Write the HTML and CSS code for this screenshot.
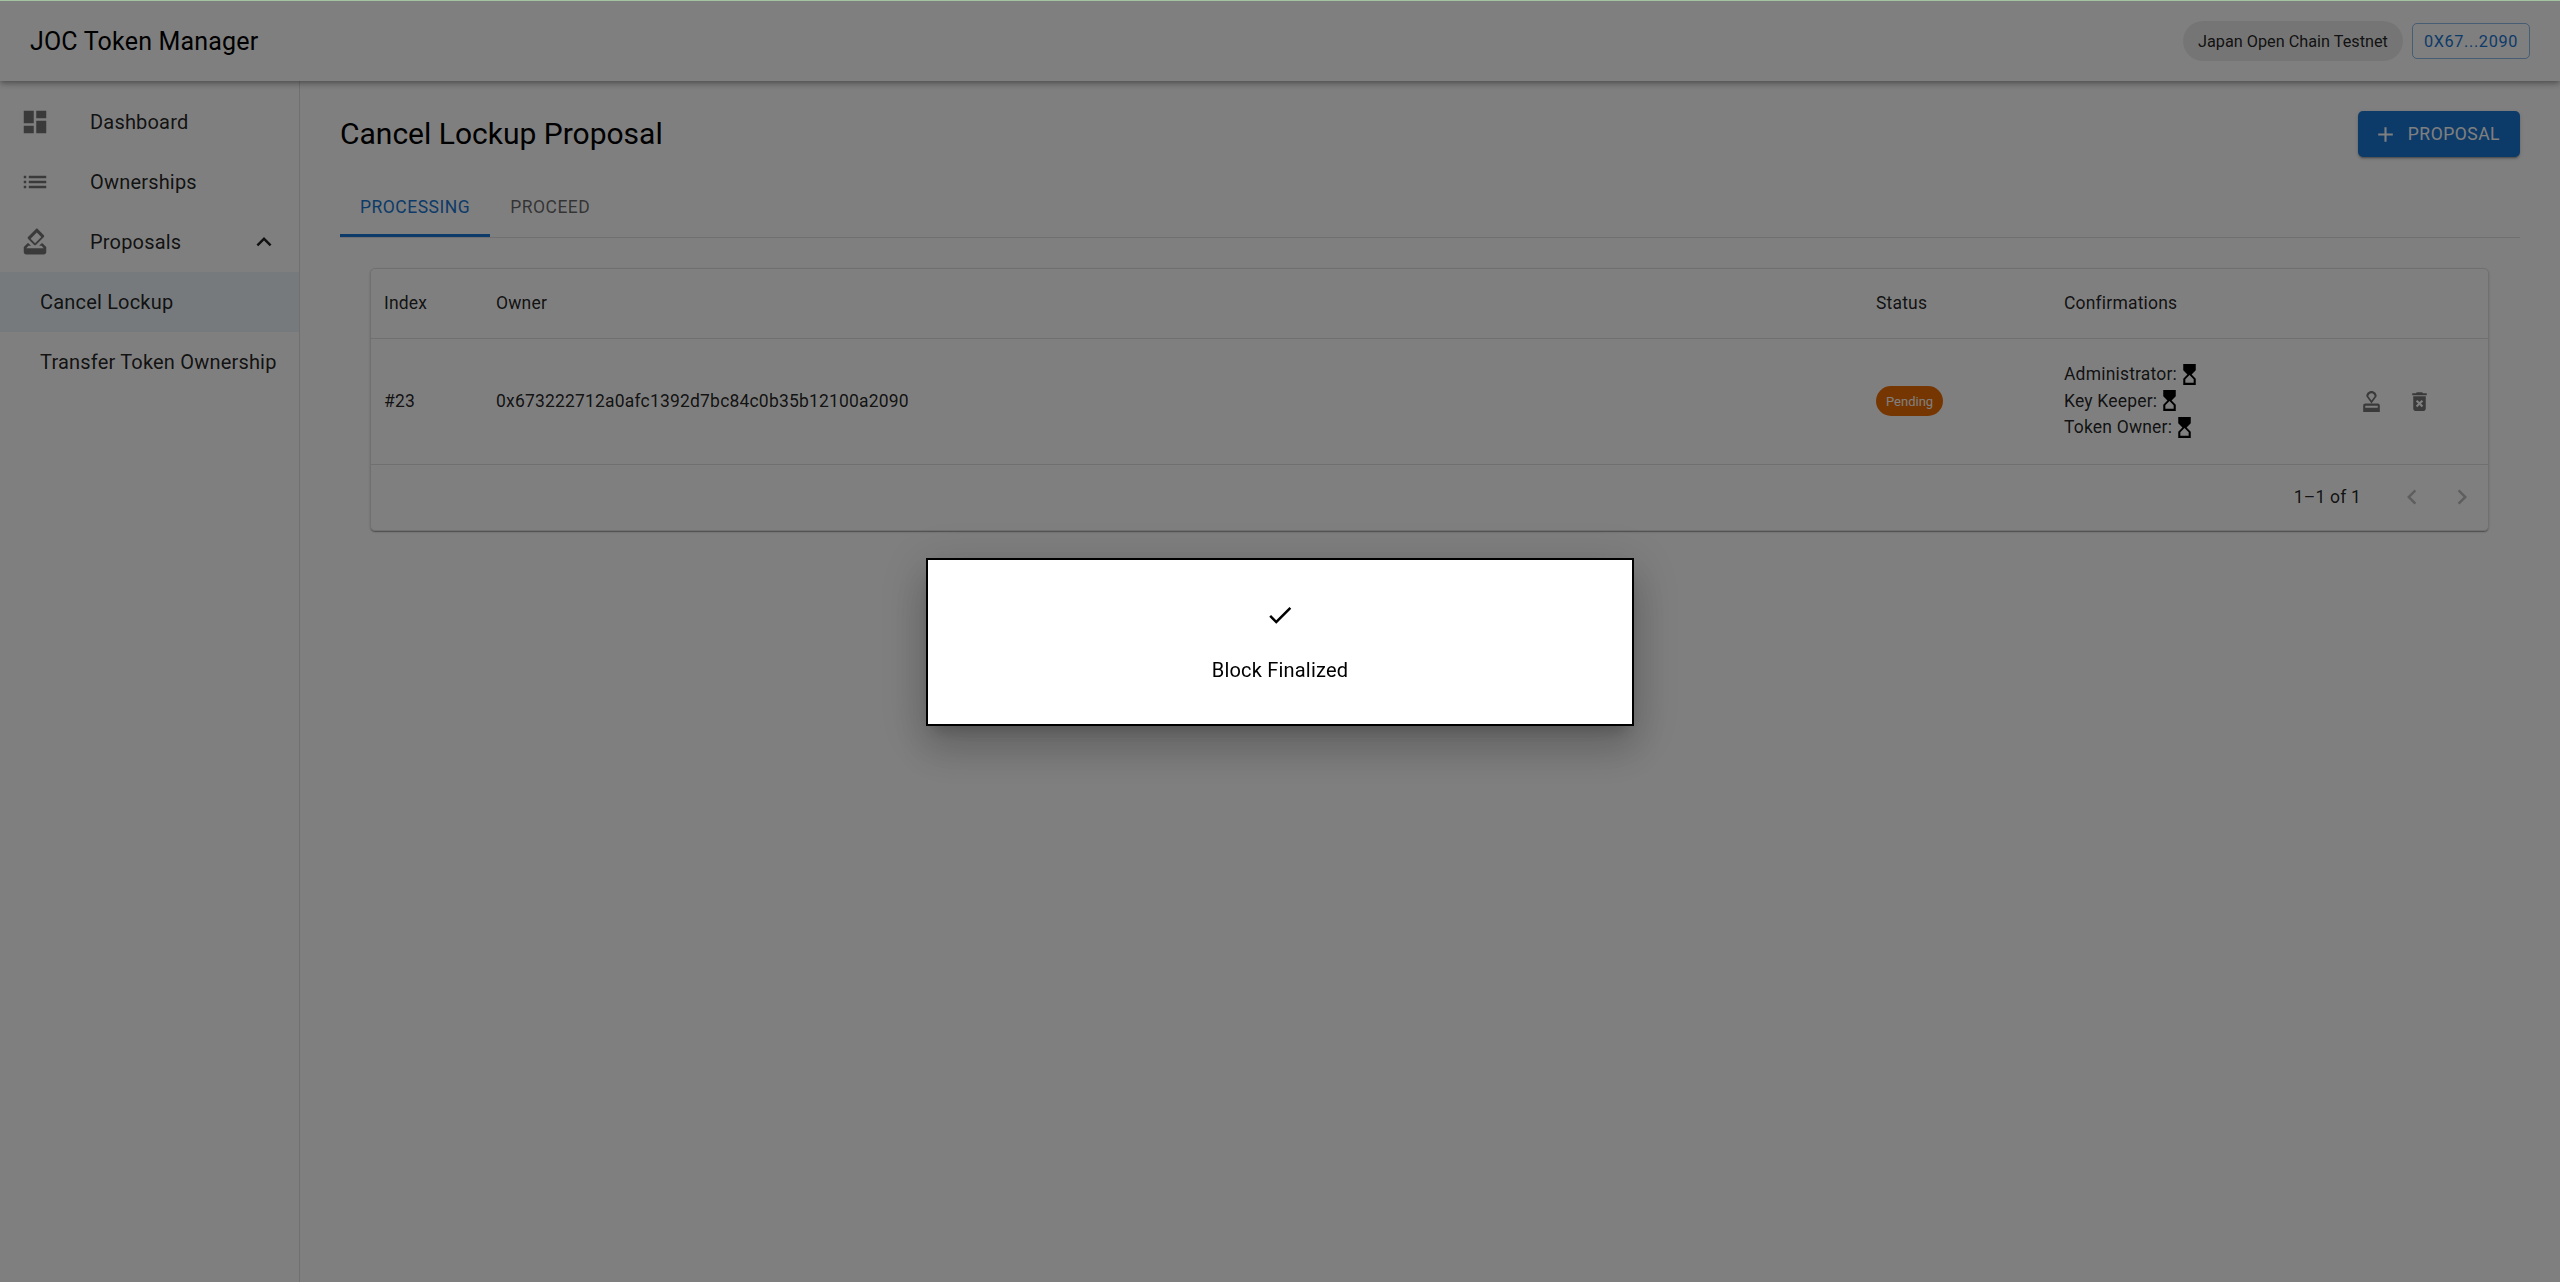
FILE: index.html
```html
<!DOCTYPE html>
<html lang="en">
<head>
    <meta charset="UTF-8">
    <meta name="viewport" content="width=device-width, initial-scale=1.0">
    <title>JOC Token Manager</title>
    <link rel="stylesheet" href="styles.css">
</head>
<body>
    <header class="app-bar">
        <div class="app-title">JOC Token Manager</div>
        <div class="app-bar-right">
            <div class="network-chip">Japan Open Chain Testnet</div>
            <button class="wallet-button">0x67...2090</button>
        </div>
    </header>
    <div class="layout">
        <nav class="sidebar">
            <div class="nav-item">
                <svg class="nav-icon" viewBox="0 0 24 24"><path d="M3 13h8V3H3v10zm0 8h8v-6H3v6zm10 0h8V11h-8v10zm0-18v6h8V3h-8z"/></svg>
                <span>Dashboard</span>
            </div>
            <div class="nav-item">
                <svg class="nav-icon" viewBox="0 0 24 24"><path d="M3 13h2v-2H3v2zm0 4h2v-2H3v2zm0-8h2V7H3v2zm4 4h14v-2H7v2zm0 4h14v-2H7v2zM7 7v2h14V7H7z"/></svg>
                <span>Ownerships</span>
            </div>
            <div class="nav-item">
                <svg class="nav-icon" viewBox="0 0 24 24"><path d="M18 13h-.68l-2 2h1.91L19 17H5l1.78-2h2.05l-2-2H6l-3 3v4c0 1.1.89 1.99 1.99 1.99H19c1.1 0 2-.89 2-1.99v-4l-3-3zm-1-5.05-4.95 4.95-3.54-3.54 4.95-4.95L17 7.95zm-4.24-6.36L6.39 7.95c-.39.39-.39 1.02 0 1.41l4.95 4.95c.39.39 1.02.39 1.41 0l6.36-6.36c.39-.39.39-1.02 0-1.41L14.16 1.6c-.38-.4-1.01-.4-1.4-.01z"/></svg>
                <span>Proposals</span>
                <svg class="nav-expand" viewBox="0 0 24 24"><path d="M12 8l-6 6 1.41 1.41L12 10.83l4.59 4.58L18 14z"/></svg>
            </div>
            <div class="nav-sub selected">Cancel Lockup</div>
            <div class="nav-sub">Transfer Token Ownership</div>
        </nav>
        <main class="content">
            <div class="page-head">
                <h1 class="page-title">Cancel Lockup Proposal</h1>
                <button class="add-button">
                    <svg viewBox="0 0 24 24"><path d="M19 13h-6v6h-2v-6H5v-2h6V5h2v6h6v2z"/></svg>
                    Proposal
                </button>
            </div>
            <div class="tabs">
                <div class="tab active">Processing</div>
                <div class="tab">Proceed</div>
            </div>
            <div class="card">
                <div class="grid-row grid-head">
                    <div class="cell">Index</div>
                    <div class="cell">Owner</div>
                    <div class="cell">Status</div>
                    <div class="cell">Confirmations</div>
                    <div class="cell"></div>
                </div>
                <div class="grid-row grid-body">
                    <div class="cell">#23</div>
                    <div class="cell">0x673222712a0afc1392d7bc84c0b35b12100a2090</div>
                    <div class="cell"><span class="status-chip">Pending</span></div>
                    <div class="cell confirmations">
                        <div class="confirm-line">Administrator:
                            <svg viewBox="0 0 24 24"><path d="m6 2 .01 6L10 12l-3.99 4.01L6 22h12v-6l-4-4 4-3.99V2H6zm10 14.5V20H8v-3.5l4-4 4 4z"/></svg>
                        </div>
                        <div class="confirm-line">Key Keeper:
                            <svg viewBox="0 0 24 24"><path d="m6 2 .01 6L10 12l-3.99 4.01L6 22h12v-6l-4-4 4-3.99V2H6zm10 14.5V20H8v-3.5l4-4 4 4z"/></svg>
                        </div>
                        <div class="confirm-line">Token Owner:
                            <svg viewBox="0 0 24 24"><path d="m6 2 .01 6L10 12l-3.99 4.01L6 22h12v-6l-4-4 4-3.99V2H6zm10 14.5V20H8v-3.5l4-4 4 4z"/></svg>
                        </div>
                    </div>
                    <div class="cell actions">
                        <svg viewBox="0 0 24 24"><path d="M4 16v6h16v-6c0-1.1-.9-2-2-2H6c-1.1 0-2 .9-2 2zm14 2H6v-2h12v2zM12 2C9.24 2 7 4.24 7 7l5 7 5-7c0-2.76-2.24-5-5-5zm0 9L9 7c0-1.66 1.34-3 3-3s3 1.34 3 3l-3 4z"/></svg>
                        <svg viewBox="0 0 24 24"><path d="M6 19c0 1.1.9 2 2 2h8c1.1 0 2-.9 2-2V7H6v12zm2.46-7.12 1.41-1.41L12 12.59l2.12-2.12 1.41 1.41L13.41 14l2.12 2.12-1.41 1.41L12 15.41l-2.12 2.12-1.41-1.41L10.59 14l-2.13-2.12zM15.5 4l-1-1h-5l-1 1H5v2h14V4z"/></svg>
                    </div>
                </div>
                <div class="grid-foot">
                    <span class="page-count">1–1 of 1</span>
                    <svg class="page-arrow" viewBox="0 0 24 24"><path d="M15.41 7.41 14 6l-6 6 6 6 1.41-1.41L10.83 12z"/></svg>
                    <svg class="page-arrow" viewBox="0 0 24 24"><path d="M10 6 8.59 7.41 13.17 12l-4.58 4.59L10 18l6-6z"/></svg>
                </div>
            </div>
        </main>
    </div>
    <div class="backdrop">
        <div class="modal">
            <svg class="modal-icon" viewBox="0 0 24 24"><path d="M9 16.17 4.83 12l-1.42 1.41L9 19 21 7l-1.41-1.41z"/></svg>
            <div class="modal-text">Block Finalized</div>
        </div>
    </div>
</body>
</html>
```

FILE: styles.css
```css
* {
    box-sizing: border-box;
}
body {
    font-family: Roboto, "Liberation Sans", sans-serif;
    margin: 0;
    height: 100vh;
    overflow: hidden;
    display: flex;
    flex-direction: column;
    background-color: #fff;
    color: rgba(0, 0, 0, 0.87);
}
svg {
    display: block;
    fill: currentColor;
}
.app-bar {
    height: 81px;
    flex-shrink: 0;
    padding: 1px 30px 0;
    display: flex;
    align-items: center;
    justify-content: space-between;
    background-color: #fff;
    box-shadow: 0 2px 4px -1px rgba(0, 0, 0, 0.2), 0 4px 5px rgba(0, 0, 0, 0.14), 0 1px 10px rgba(0, 0, 0, 0.12);
    position: relative;
    z-index: 1;
}
.app-title {
    font-size: 25px;
    font-weight: 400;
    letter-spacing: 0.0075em;
    color: #000;
}
.app-bar-right {
    display: flex;
    align-items: center;
    gap: 9px;
}
.network-chip {
    height: 40px;
    padding: 0 15px;
    border-radius: 20px;
    display: flex;
    align-items: center;
    font-size: 16.25px;
    background-color: rgba(0, 0, 0, 0.08);
}
.wallet-button {
    height: 36px;
    padding: 0 11px;
    font-family: inherit;
    font-size: 16.25px;
    font-weight: 400;
    letter-spacing: 0.04em;
    text-transform: uppercase;
    color: #1976d2;
    background: none;
    border: 1px solid rgba(25, 118, 210, 0.5);
    border-radius: 5px;
}
.layout {
    flex: 1;
    display: flex;
    min-height: 0;
}
.sidebar {
    width: 300px;
    flex-shrink: 0;
    padding-top: 11px;
    border-right: 1px solid rgba(0, 0, 0, 0.12);
    font-size: 20px;
    letter-spacing: 0.00938em;
}
.nav-item {
    height: 60px;
    padding: 0 20px;
    display: flex;
    align-items: center;
}
.nav-icon {
    width: 30px;
    height: 30px;
    margin-right: 40px;
    color: rgba(0, 0, 0, 0.54);
}
.nav-expand {
    width: 30px;
    height: 30px;
    margin-left: auto;
}
.nav-sub {
    height: 60px;
    padding-left: 40px;
    display: flex;
    align-items: center;
}
.nav-sub.selected {
    background-color: rgba(25, 118, 210, 0.08);
}
.content {
    flex: 1;
    min-width: 0;
    padding: 30px 40px 0;
}
.page-head {
    display: flex;
    align-items: center;
    justify-content: space-between;
    margin-bottom: 20px;
}
.page-title {
    margin: 0;
    font-size: 30px;
    font-weight: 400;
    line-height: 1.334;
    color: #000;
}
.add-button {
    height: 46px;
    padding: 0 20px 0 15px;
    display: flex;
    align-items: center;
    gap: 10px;
    font-family: inherit;
    font-size: 17.5px;
    font-weight: 400;
    letter-spacing: 0.02857em;
    text-transform: uppercase;
    color: #fff;
    background-color: #1976d2;
    border: none;
    border-radius: 5px;
    box-shadow: 0 3px 1px -2px rgba(0, 0, 0, 0.2), 0 2px 2px rgba(0, 0, 0, 0.14), 0 1px 5px rgba(0, 0, 0, 0.12);
}
.add-button svg {
    width: 25px;
    height: 25px;
}
.tabs {
    display: flex;
    height: 61px;
    border-bottom: 1px solid rgba(0, 0, 0, 0.12);
}
.tab {
    height: 60px;
    padding: 0 20px;
    display: flex;
    align-items: center;
    font-size: 17.5px;
    font-weight: 400;
    letter-spacing: 0.02857em;
    text-transform: uppercase;
    color: rgba(0, 0, 0, 0.6);
}
.tab.active {
    color: #1976d2;
    border-bottom: 3px solid #1976d2;
    padding-top: 3px;
}
.card {
    margin: 30px 31px 0 30px;
    border-radius: 5px;
    border: 1px solid rgba(224, 224, 224, 1);
    font-size: 17.5px;
    letter-spacing: 0.01071em;
    box-shadow: 0 2px 1px -1px rgba(0, 0, 0, 0.2), 0 1px 1px rgba(0, 0, 0, 0.14), 0 1px 3px rgba(0, 0, 0, 0.12);
}
.grid-row {
    display: grid;
    grid-template-columns: 112px 1fr 188px 295px 142px;
    border-bottom: 1px solid rgba(224, 224, 224, 1);
}
.grid-head {
    height: 70px;
    padding-bottom: 2px;
}
.grid-body {
    height: 126px;
    padding-bottom: 1px;
}
.cell {
    padding: 0 13px;
    display: flex;
    align-items: center;
}
.status-chip {
    height: 30px;
    padding: 0 10px;
    display: flex;
    align-items: center;
    border-radius: 15px;
    font-size: 13px;
    letter-spacing: 0;
    color: #fff;
    background-color: #ed6c02;
}
.confirmations {
    flex-direction: column;
    align-items: flex-start;
    justify-content: center;
    padding-bottom: 1px;
}
.confirm-line {
    display: flex;
    align-items: center;
    gap: 2px;
    height: 26.5px;
}
.confirm-line svg {
    width: 25px;
    height: 25px;
    color: #000;
    margin-left: -2px;
}
.actions {
    padding: 0 0 0 13px;
    gap: 23px;
    color: rgba(0, 0, 0, 0.54);
}
.actions svg {
    width: 25px;
    height: 25px;
}
.grid-foot {
    height: 65px;
    padding: 0 11px 1px 0;
    display: flex;
    align-items: center;
    justify-content: flex-end;
}
.page-count {
    margin-right: 36px;
}
.page-arrow {
    width: 30px;
    height: 30px;
    margin-left: 20px;
    color: rgba(0, 0, 0, 0.26);
}
.page-arrow:first-of-type {
    margin-left: 0;
}
/* overlay sits over the whole page */
.backdrop {
    position: fixed;
    inset: 0;
    z-index: 10;
    display: flex;
    align-items: center;
    justify-content: center;
    border-top: 1px solid #a3c4a3;
    background-color: rgba(0, 0, 0, 0.5);
}
.modal {
    width: 708px;
    height: 168px;
    padding-top: 40px;
    display: flex;
    flex-direction: column;
    align-items: center;
    gap: 25px;
    background-color: #fff;
    border: 2px solid #000;
    box-shadow: 0 11px 15px -7px rgba(0, 0, 0, 0.2), 0 24px 38px 3px rgba(0, 0, 0, 0.14), 0 9px 46px 8px rgba(0, 0, 0, 0.12);
}
.modal-icon {
    width: 30px;
    height: 30px;
    color: #000;
}
.modal-text {
    font-size: 20px;
    line-height: 30px;
    letter-spacing: 0.00938em;
    color: #000;
}
```
